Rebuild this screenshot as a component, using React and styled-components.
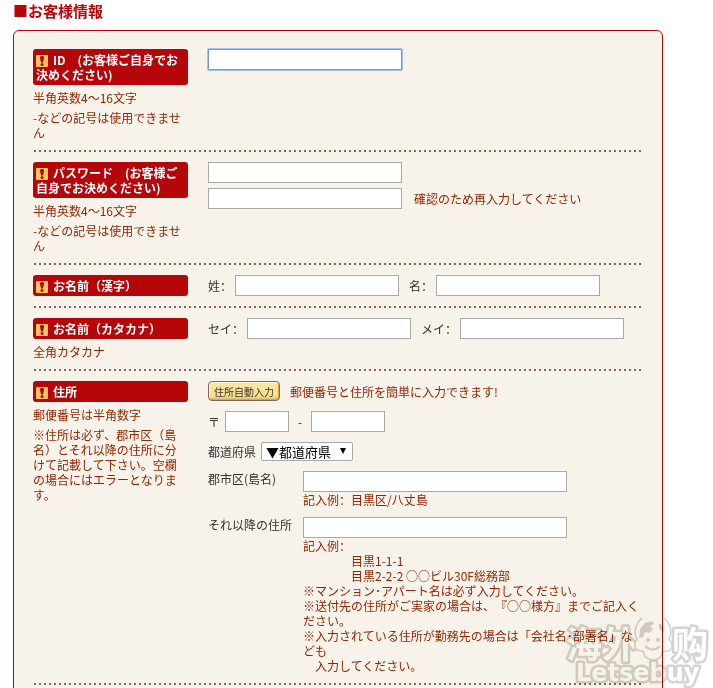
import React from 'react'
import styled, { createGlobalStyle, css } from 'styled-components'

const GlobalStyle = createGlobalStyle`
  * {
    box-sizing: border-box;
  }
  body {
    margin: 0;
    background: #fff;
    color: #333;
    font: 12px/15px 'Noto Sans CJK SC', 'Noto Sans CJK JP', sans-serif;
    text-spacing-trim: space-all;
  }
`

export default function App() {
  return (
    <Page>
      <GlobalStyle />
      <Title>■お客様情報</Title>
      <Panel>
        <Row>
          <div>
            <Tag htmlFor="login">
              <Required />
              ID　(お客様ご自身でお決めください)
            </Tag>
            <LoginNotes />
          </div>
          <Fields>
            <Line>
              <Input id="login" type="text" $width={194} $active />
            </Line>
          </Fields>
        </Row>

        <Row>
          <div>
            <Tag htmlFor="password">
              <Required />
              パスワード　(お客様ご自身でお決めください)
            </Tag>
            <LoginNotes />
          </div>
          <Fields $gap={5}>
            <Line>
              <Input id="password" type="password" $width={194} />
            </Line>
            <Line $gap={12}>
              <Input id="password2" type="password" $width={194} />
              <Hint htmlFor="password2">確認のため再入力してください</Hint>
            </Line>
          </Fields>
        </Row>

        <Row>
          <div>
            <Tag as="div" id="kanji">
              <Required />
              お名前（漢字）
            </Tag>
          </div>
          <NamePair group="kanji" labels={['姓：', '名：']} />
        </Row>

        <Row>
          <div>
            <Tag as="div" id="kana">
              <Required />
              お名前（カタカナ）
            </Tag>
            <Note>全角カタカナ</Note>
          </div>
          <NamePair group="kana" labels={['セイ：', 'メイ：']} />
        </Row>

        <Row>
          <div>
            <Tag as="div" id="address">
              <Required />
              住所
            </Tag>
            <Note>郵便番号は半角数字</Note>
            <Note>
              ※住所は必ず、郡市区（島名）とそれ以降の住所に分けて記載して下さい。空欄の場合にはエラーとなります。
            </Note>
          </div>
          <Fields role="group" aria-labelledby="address" $gap={10}>
            <Line $gap={10}>
              <FillButton type="button">住所自動入力</FillButton>
              <Hint as="span">郵便番号と住所を簡単に入力できます!</Hint>
            </Line>
            <Line $gap={5}>
              <label htmlFor="zip1">〒</label>
              <Input id="zip1" type="text" $width={64} />
              <Dash htmlFor="zip2">-</Dash>
              <Input id="zip2" type="text" $width={74} />
            </Line>
            <Line $gap={5}>
              <label htmlFor="prefecture">都道府県</label>
              <SelectBox>
                <Select id="prefecture">
                  <option>▼都道府県</option>
                </Select>
                <Arrow viewBox="0 0 6 6" aria-hidden="true">
                  <path d="M0 0h6L3 6z" />
                </Arrow>
              </SelectBox>
            </Line>
            <Detail>
              <label htmlFor="city">郡市区(島名)</label>
              <div>
                <Input id="city" type="text" $width={264} />
                <Example>記入例：目黒区/八丈島</Example>
              </div>
            </Detail>
            <Detail>
              <label htmlFor="street">それ以降の住所</label>
              <div>
                <Input id="street" type="text" $width={264} />
                <Example>記入例：</Example>
                <Example $indent>目黒1-1-1</Example>
                <Example $indent>目黒2-2-2 ○○ビル30F総務部</Example>
                <Example>※マンション･アパート名は必ず入力してください。</Example>
                <Example>
                  ※送付先の住所がご実家の場合は、『○○様方』までご記入ください。
                </Example>
                <Example>
                  ※入力されている住所が勤務先の場合は「会社名･部署名」なども
                  <br />　入力してください。
                </Example>
              </div>
            </Detail>
          </Fields>
        </Row>
      </Panel>
      <Watermark />
    </Page>
  )
}

function Required() {
  return (
    <Mark viewBox="0 0 12 12" aria-hidden="true">
      <rect width="12" height="12" rx="1" fill="#fdc45f" />
      <path d="M4 2q0-1 2-1t2 1q0 2-1 5.500H5Q4 4 4 2z" fill="#b5070a" />
      <circle cx="6" cy="9.500" r="1.500" fill="#b5070a" />
    </Mark>
  )
}

function LoginNotes() {
  return (
    <>
      <Note>半角英数4～16文字</Note>
      <Note>-などの記号は使用できません</Note>
    </>
  )
}

function NamePair({ group, labels }) {
  return (
    <Fields role="group" aria-labelledby={group}>
      <Line $gap={10}>
        {labels.map((label, i) => (
          <Line key={label} $gap={3}>
            <label htmlFor={`${group}${i}`}>{label}</label>
            <Input id={`${group}${i}`} type="text" $width={164} />
          </Line>
        ))}
      </Line>
    </Fields>
  )
}

// Multiplied over the form, so the text under it stays readable
function Watermark() {
  return (
    <Stamp viewBox="0 0 148 70">
      <g fill="#fff" stroke="#d6d4d0" strokeWidth="5" strokeLinejoin="round" paintOrder="stroke">
        <Brand x="1" y="40" $size={36}>海外</Brand>
        <Brand x="107" y="40" $size={36}>购</Brand>
        <path
          strokeWidth="3"
          d="M72 31a6 6 0 0 1 1-9 17 17 0 1 1 30 0 6 6 0 0 1 1 10l-7 1q-1 8-9 8t-9-8z"
        />
        <Brand x="11" y="63" $size={24} $latin>Letsebuy</Brand>
      </g>
      <g fill="#d6d4d0">
        <path d="M75 11l5-6 7-2 2 3-4 2 3 3-4 4-4-1-2 5-4 1z" />
        <path d="M94 5l6 5-1 4-5-3z" />
        <circle cx="83" cy="22" r="2" />
        <circle cx="93" cy="22" r="2" />
      </g>
      <path d="M80 28q8 7 15 0" fill="none" stroke="#d6d4d0" strokeWidth="2" />
    </Stamp>
  )
}

const Page = styled.div`
  position: relative;
  height: 100vh;
  padding: 0 13px;
  overflow: hidden;
`

const Title = styled.h1`
  margin: 0;
  padding-bottom: 8px;
  color: #b5070a;
  font-size: 15px;
  font-weight: bold;
  line-height: 22px;
`

const Panel = styled.form`
  max-width: 650px;
  padding: 8px 20px 20px 19px;
  border: 1px solid #b5070a;
  border-radius: 6px;
  background: #f7f2ea;
`

// The dots are wider apart than a dotted border would put them
const Row = styled.section`
  display: grid;
  grid-template-columns: 155px 1fr;
  column-gap: 20px;
  align-items: start;
  padding: 10px 0 12px;
  background: repeating-linear-gradient(
      90deg,
      transparent 0 1px,
      #7f685b 1px 3px,
      transparent 3px 5px
    )
    bottom / 100% 2px no-repeat;
`

const Tag = styled.label`
  display: block;
  padding: 3px;
  border-radius: 3px;
  background: #b5070a;
  color: #fff;
  font-weight: bold;
`

const Mark = styled.svg`
  width: 12px;
  height: 12px;
  margin-right: 5px;
  vertical-align: -2px;
`

const Note = styled.p`
  margin: 5px 0 0;
  color: #932600;
`

const Fields = styled.div`
  display: flex;
  flex-direction: column;
  gap: ${props => props.$gap || 0}px;
`

const Line = styled.div`
  display: flex;
  align-items: center;
  gap: ${props => props.$gap || 0}px;
`

const Input = styled.input`
  display: block;
  width: ${props => props.$width}px;
  max-width: 100%;
  height: 21px;
  padding: 1px 3px;
  border: 1px solid #a9a9a9;
  background: #fff;
  font: inherit;
  ${props =>
    props.$active &&
    css`
      border-color: #7396d8;
      border-radius: 1px;
      box-shadow: 0 0 0 1px #a3c3f3;
    `}
`

const Hint = styled.label`
  color: #932600;
`

const Dash = styled.label`
  width: 12px;
  text-align: center;
`

const FillButton = styled.button`
  height: 20px;
  padding: 0 5px;
  border: 1px solid #7f685b;
  border-radius: 4px;
  background: linear-gradient(#fbe7a4, #f8de90 80%, #e8b050);
  box-shadow: inset 1px 1px #fff6d8, inset -1px -1px #e2a546;
  color: #333;
  font: inherit;
  font-size: 10px;
`

const SelectBox = styled.div`
  position: relative;
`

const Select = styled.select`
  display: block;
  width: 92px;
  height: 19px;
  padding: 0 4px;
  border: 1px solid #a9a9a9;
  border-radius: 2px;
  appearance: none;
  background: #fff;
  color: #000;
  font: inherit;
  font-size: 13px;
  line-height: 17px;
`

const Arrow = styled.svg`
  position: absolute;
  top: 6px;
  right: 7px;
  width: 6px;
  height: 6px;
  pointer-events: none;
`

const Detail = styled.div`
  display: grid;
  grid-template-columns: 95px 1fr;
`

const Example = styled.p`
  margin: 0;
  padding-left: ${props => (props.$indent ? 48 : 0)}px;
  color: #932600;
`

const Stamp = styled.svg`
  position: absolute;
  right: 0;
  bottom: 0;
  width: 148px;
  height: 70px;
  mix-blend-mode: multiply;
  pointer-events: none;
`

const Brand = styled.text`
  font-family: ${props =>
    props.$latin ? "'DejaVu Sans', sans-serif" : "'Noto Sans CJK SC', sans-serif"};
  font-size: ${props => props.$size}px;
  font-weight: bold;
`
